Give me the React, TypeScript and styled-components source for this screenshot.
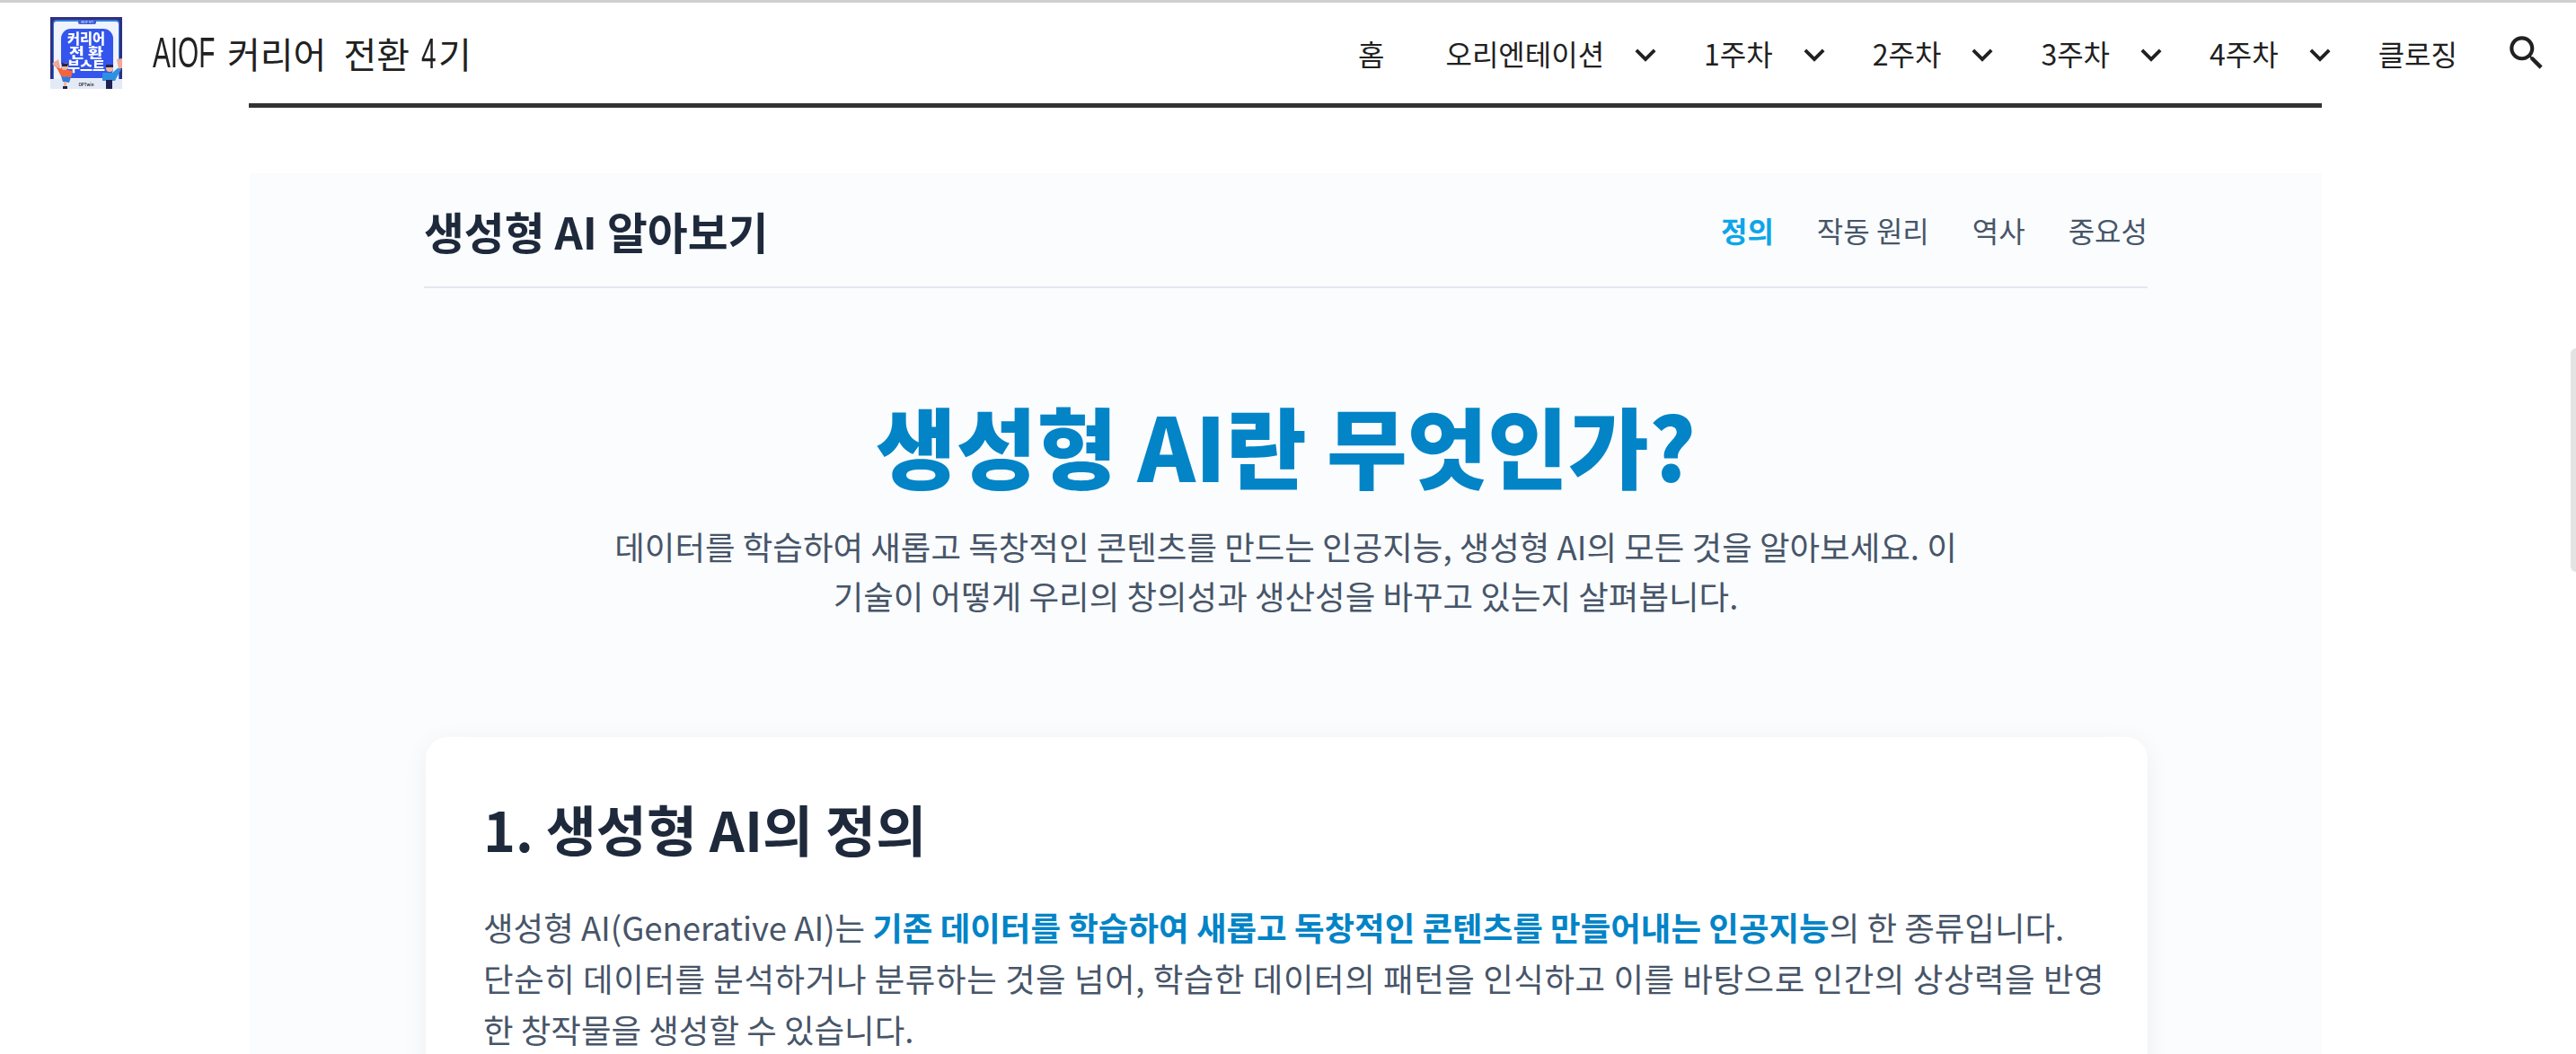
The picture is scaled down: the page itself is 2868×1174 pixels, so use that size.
import React from "react";
import styled, { createGlobalStyle } from "styled-components";

const KR = `"Noto Sans CJK KR", "Noto Sans", sans-serif`;

const Global = createGlobalStyle`
  html, body { margin: 0; padding: 0; background: #fff; overflow: hidden; height: 1174px; }
  body { font-family: ${KR}; word-break: keep-all; }
  * { box-sizing: border-box; }
`;

const Page = styled.div`
  position: relative;
  width: 2868px;
  height: 1174px;
  overflow: hidden;
  border-top: 3px solid #cfcfcf;
`;

const TopBar = styled.header`
  display: flex;
  align-items: center;
  justify-content: space-between;
  height: 112px;
  padding: 0 30px 0 56px;
`;

const Brand = styled.div`
  display: flex;
  align-items: center;
  gap: 34px;
`;

const LogoSvg = styled.svg`
  width: 80px;
  height: 80px;
  flex: none;
  filter: blur(0.6px);
`;

const BrandName = styled.div`
  display: flex;
  align-items: center;
  font-size: 40px;
  line-height: 56px;
  color: #212121;
  white-space: nowrap;
`;

const Condensed = styled.span<{ $width: number }>`
  display: inline-block;
  width: ${(p) => p.$width}px;
  font-family: "Liberation Sans", sans-serif;
  font-size: 48px;
  transform: scaleX(0.62);
  transform-origin: left center;
`;

const Word = styled.span<{ $gap: number }>`
  margin-left: ${(p) => p.$gap}px;
`;

const SiteNav = styled.nav`
  display: flex;
  align-items: center;
`;

const SiteItem = styled.div<{ $menu?: boolean }>`
  display: flex;
  align-items: center;
  padding: 0 ${(p) => (p.$menu ? "8px" : "34px")} 0 34px;
  font-size: 32px;
  line-height: 44px;
  color: #212121;
  white-space: nowrap;
`;

const Chevron = styled.svg`
  width: 46px;
  height: 46px;
  margin-left: 23px;
  margin-top: 4px;
  fill: #212121;
`;

const SearchIcon = styled.svg`
  width: 50px;
  height: 50px;
  fill: #212121;
  margin-left: 18px;
`;

const HeaderRule = styled.div`
  height: 5px;
  margin: 0 283px 0 277px;
  background: #333;
`;

const Panel = styled.main`
  margin: 73px 283px 0 278px;
  height: 1000px;
  padding: 0 194px;
  background: #fafcfd;
`;

const SubNav = styled.div`
  display: flex;
  align-items: center;
  justify-content: space-between;
  height: 128px;
  border-bottom: 2px solid #e2e8f0;
`;

const SubTitle = styled.div`
  font-size: 48.75px;
  font-weight: 700;
  color: #1e293b;
`;

const SubLinks = styled.div`
  display: flex;
  gap: 48px;
`;

const SubLink = styled.a<{ $active?: boolean }>`
  font-size: 32px;
  font-weight: ${(p) => (p.$active ? 700 : 400)};
  color: ${(p) => (p.$active ? "#0ea5e9" : "#475569")};
`;

const Hero = styled.section`
  display: flex;
  flex-direction: column;
  align-items: center;
  padding-top: 114px;
  text-align: center;
`;

const HeroTitle = styled.h1`
  margin: 0;
  font-size: 97.5px;
  line-height: 120px;
  font-weight: 800;
  color: #0284c7;
`;

const HeroText = styled.p`
  margin: 26px 0 0;
  max-width: 1536px;
  font-size: 36.5px;
  line-height: 55px;
  color: #475569;
`;

const Card = styled.article`
  margin: 130px 0 0 2px;
  padding: 62px 40px 62px 64px;
  border-radius: 24px;
  background: #fff;
  box-shadow: 0 6px 30px rgba(15, 23, 42, 0.06);
`;

const CardTitle = styled.h2`
  margin: 0;
  font-size: 61px;
  line-height: 80px;
  font-weight: 700;
  color: #1e293b;
`;

const CardText = styled.p`
  margin: 41px 0 0;
  font-size: 36.5px;
  line-height: 57px;
  color: #475569;
`;

const Strong = styled.strong`
  font-weight: 700;
  color: #0284c7;
`;

const LooseLine = styled.span`
  letter-spacing: 0.55px;
`;

const ScrollThumb = styled.div`
  position: absolute;
  right: 0;
  top: 385px;
  width: 6px;
  height: 249px;
  border-radius: 6px 0 0 6px;
  background: #e3e3e3;
`;

const chevronPath = "M16.59 8.59L12 13.17 7.41 8.59 6 10l6 6 6-6z";
const Down = () => (
  <Chevron viewBox="0 0 24 24">
    <path d={chevronPath} />
  </Chevron>
);

const Logo = () => (
  <LogoSvg viewBox="0 0 80 80">
    <rect width="80" height="80" fill="#2f2f80" />
    <rect x="3" y="3" width="74" height="72" rx="4" fill="#2f7de0" />
    <rect x="4" y="5" width="72" height="72" rx="3" fill="#eef3fc" />
    <rect x="31" y="3" width="20" height="5" rx="2" fill="#3a5bd8" />
    <text x="41" y="7" fontSize="3.5" fill="#fff" textAnchor="middle" fontFamily={KR}>AIOF 4기</text>
    <rect x="12" y="13" width="58" height="55" rx="11" fill="#3355ee" />
    <g fontFamily={KR} fontWeight="900" fill="#fff" textAnchor="middle">
      <text x="40" y="30" fontSize="16" textLength="42" lengthAdjust="spacingAndGlyphs">커리어</text>
      <text x="40" y="45" fontSize="15" textLength="38" lengthAdjust="spacingAndGlyphs">전 환</text>
      <text x="40" y="60" fontSize="15" textLength="42" lengthAdjust="spacingAndGlyphs">부스트</text>
    </g>
    <rect x="0" y="69" width="80" height="11" fill="#e3eaf6" />
    <path d="M2 52 L9 47 L11 56 L8 58 Z" fill="#f0a898" />
    <path d="M7 56 L15 58 L25 60 L23 68 L12 66 Z" fill="#f2653f" />
    <circle cx="16" cy="55" r="4" fill="#f4b79c" />
    <path d="M13 51 L20 52 L19 55 L13 55 Z" fill="#22244f" />
    <path d="M12 66 L23 67 L21 73 L14 72 Z" fill="#2f7de0" />
    <rect x="15" y="72" width="3" height="7" fill="#f4b79c" />
    <rect x="14" y="77" width="5" height="3" fill="#1e2250" />
    <path d="M74 47 L80 46 L80 57 L76 58 Z" fill="#f0a898" />
    <path d="M75 57 L79 58 L72 71 L58 71 L58 62 L69 62 Z" fill="#2f8fe0" />
    <circle cx="66" cy="57" r="4" fill="#f4b79c" />
    <path d="M62 53 L70 53 L70 56 L62 56 Z" fill="#22244f" />
    <rect x="62" y="70" width="7" height="10" fill="#1e2250" />
    <text x="40" y="77" fontSize="4.5" fontWeight="700" fill="#333" textAnchor="middle" fontFamily={KR}>OPTwin</text>
  </LogoSvg>
);

export default function App() {
  return (
    <Page>
      <Global />
      <TopBar>
        <Brand>
          <Logo />
          <BrandName>
            <Condensed $width={70}>AIOF</Condensed>
            <Word $gap={13}>커리어</Word>
            <Word $gap={19}>전환</Word>
            <Word $gap={13}>
              <Condensed $width={19}>4</Condensed>기
            </Word>
          </BrandName>
        </Brand>
        <SiteNav>
          <SiteItem>홈</SiteItem>
          <SiteItem $menu>오리엔테이션<Down /></SiteItem>
          <SiteItem $menu>1주차<Down /></SiteItem>
          <SiteItem $menu>2주차<Down /></SiteItem>
          <SiteItem $menu>3주차<Down /></SiteItem>
          <SiteItem $menu>4주차<Down /></SiteItem>
          <SiteItem>클로징</SiteItem>
          <SearchIcon viewBox="0 0 24 24">
            <path d="M15.5 14h-.79l-.28-.27C15.41 12.59 16 11.11 16 9.5 16 5.91 13.09 3 9.5 3S3 5.91 3 9.5 5.91 16 9.5 16c1.61 0 3.09-.59 4.23-1.57l.27.28v.79l5 4.99L20.49 19l-4.99-5zm-6 0C7.01 14 5 11.99 5 9.5S7.01 5 9.5 5 14 7.01 14 9.5 11.99 14 9.5 14z" />
          </SearchIcon>
        </SiteNav>
      </TopBar>
      <HeaderRule />
      <Panel>
        <SubNav>
          <SubTitle>생성형 AI 알아보기</SubTitle>
          <SubLinks>
            <SubLink $active>정의</SubLink>
            <SubLink>작동 원리</SubLink>
            <SubLink>역사</SubLink>
            <SubLink>중요성</SubLink>
          </SubLinks>
        </SubNav>
        <Hero>
          <HeroTitle>생성형 AI란 무엇인가?</HeroTitle>
          <HeroText>
            데이터를 학습하여 새롭고 독창적인 콘텐츠를 만드는 인공지능, 생성형 AI의 모든 것을 알아보세요. 이 기술이 어떻게 우리의 창의성과 생산성을 바꾸고 있는지 살펴봅니다.
          </HeroText>
        </Hero>
        <Card>
          <CardTitle>1. 생성형 AI의 정의</CardTitle>
          <CardText>
            생성형 AI(Generative AI)는 <Strong>기존 데이터를 학습하여 새롭고 독창적인 콘텐츠를 만들어내는 인공지능</Strong>의 한 종류입니다.{" "}
            <LooseLine>단순히 데이터를 분석하거나 분류하는 것을 넘어, 학습한 데이터의 패턴을 인식하고 이를 바탕으로 인간의 상상력을 반영</LooseLine>
            <br />한 창작물을 생성할 수 있습니다.
          </CardText>
        </Card>
      </Panel>
      <ScrollThumb />
    </Page>
  );
}
